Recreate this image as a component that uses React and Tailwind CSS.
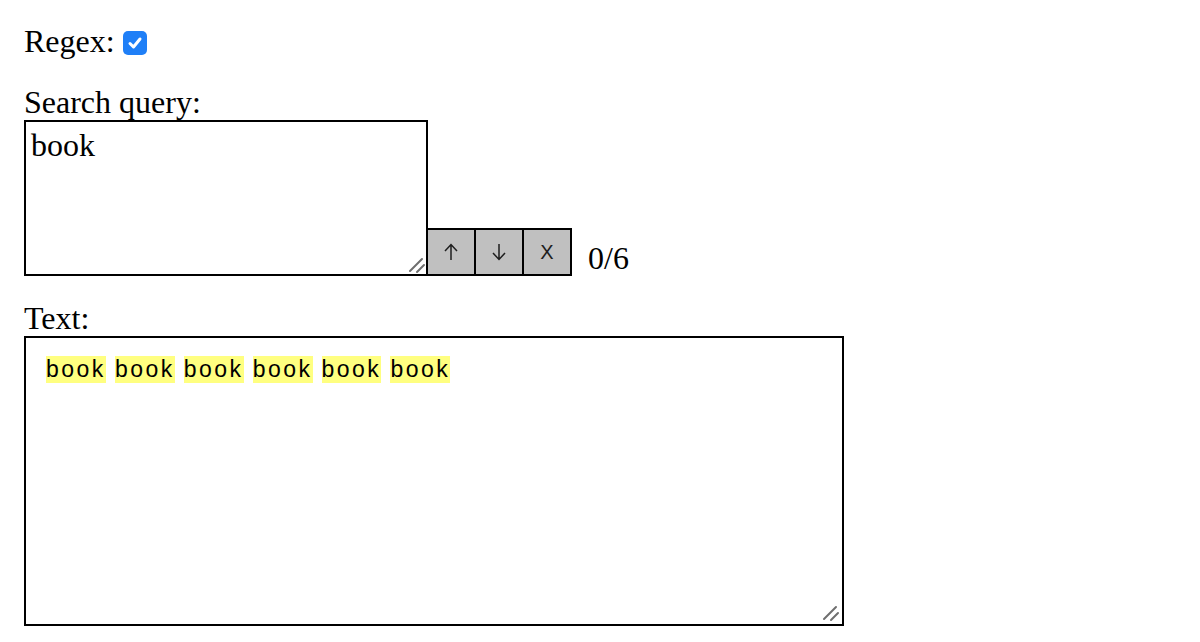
function Grip() {
  return (
    <svg className="absolute right-[2px] bottom-[2px] pointer-events-none" width="18" height="18" viewBox="0 0 18 18">
      <path d="M2 15 L14 3 M9 16 L16 9" stroke="#6f6f6f" strokeWidth="2" strokeLinecap="round" />
    </svg>
  );
}

export default function App() {
  const serif = { fontFamily: '"Liberation Serif", "Times New Roman", serif' };
  const sans = { fontFamily: '"Liberation Sans", Arial, sans-serif' };
  return (
    <div className="bg-white w-[1200px] h-[642px] p-6 text-black text-[32px] leading-[35px]" style={serif}>
      <div className="flex items-center h-[35px]">
        <span>Regex:</span>
        <span className="ml-[8px] mt-[2px] w-6 h-6 rounded-[5px] bg-[#1f7ff7] flex items-center justify-center">
          <svg width="18" height="18" viewBox="0 0 18 18" fill="none">
            <path d="M4 9.5 L7.5 13 L14 5" stroke="white" strokeWidth="3" strokeLinecap="round" strokeLinejoin="round" />
          </svg>
        </span>
      </div>
      <div className="mt-[26px]">Search query:</div>
      <div className="flex items-end">
        <div className="relative">
          <textarea
            defaultValue="book"
            className="block w-[404px] h-[156px] border-2 border-black px-[5px] pt-[6px] text-[32px] leading-[35px] outline-none resize-none"
            style={serif}
          />
          <Grip />
        </div>
        <div className="flex -ml-[2px]">
          <button className="w-[50px] h-[48px] border-2 border-black bg-[#c0c0c0] flex items-center justify-center">
            <svg width="14" height="18" viewBox="0 0 14 18" fill="none">
              <path d="M7 1.5 V17 M1 8 L7 1.5 L13 8" stroke="#1e1e1e" strokeWidth="1.5" />
            </svg>
          </button>
          <button className="w-[50px] h-[48px] -ml-[2px] border-2 border-black bg-[#c0c0c0] flex items-center justify-center">
            <svg width="14" height="18" viewBox="0 0 14 18" fill="none">
              <path d="M7 1 V16.5 M1 10 L7 16.5 L13 10" stroke="#1e1e1e" strokeWidth="1.5" />
            </svg>
          </button>
          <button className="w-[50px] h-[48px] -ml-[2px] border-2 border-black bg-[#c0c0c0] text-[20px] text-[#1e1e1e] flex items-center justify-center" style={sans}>X</button>
        </div>
        <span className="ml-[16px] mb-0">0/6</span>
      </div>
      <div className="mt-[25px]">Text:</div>
      <div className="relative w-[820px] h-[290px] border-2 border-black px-[20px] pt-[18px]">
        <div className="flex gap-[9px] text-[23px] leading-[27px] tracking-[2.5px]" style={sans}>
          {Array.from({ length: 6 }).map((_, i) => (
            <span key={i} className="bg-[#ffff80]">book</span>
          ))}
        </div>
        <Grip />
      </div>
    </div>
  );
}
